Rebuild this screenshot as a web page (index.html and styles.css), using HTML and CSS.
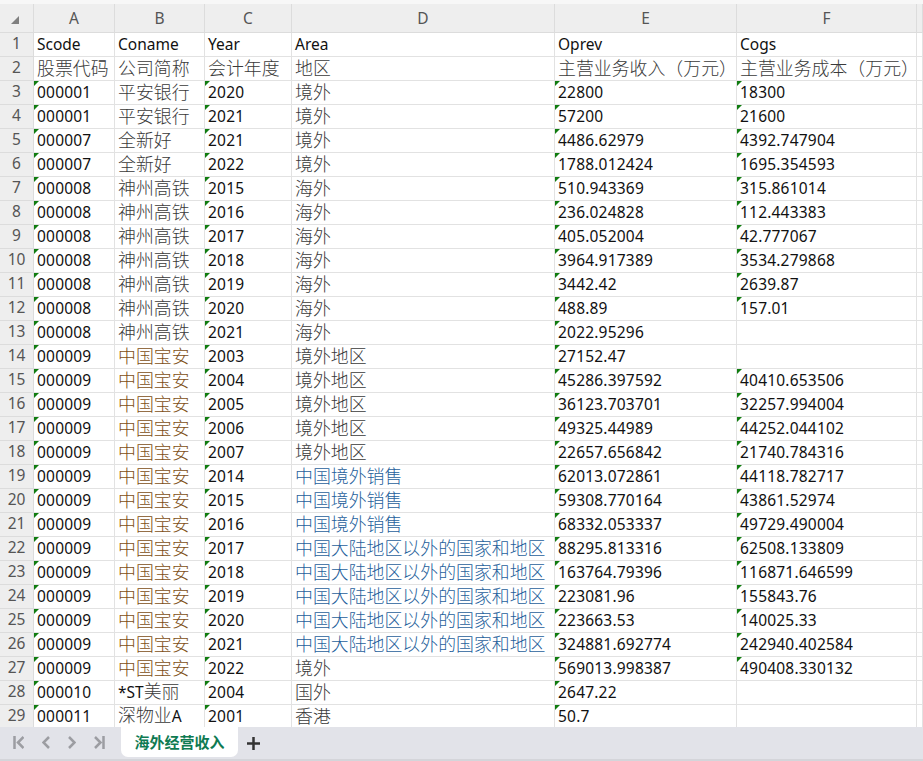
FILE: index.html
```html
<!DOCTYPE html>
<html lang="en">
<head>
    <meta charset="UTF-8">
    <meta name="viewport" content="width=device-width, initial-scale=1.0">
    <title>海外经营收入</title>
    <link rel="stylesheet" href="styles.css">
</head>
<body>
    <div class="sheet">
        <table class="grid">
            <colgroup>
                <col class="col-head"><col class="col-a"><col class="col-b"><col class="col-c"><col class="col-d"><col class="col-e"><col class="col-f"><col class="col-g">
            </colgroup>
            <thead>
                <tr>
                    <th class="corner"><svg width="8" height="8" viewBox="0 0 8 8"><path d="M8 0V8H0Z" fill="#7f7f7f"/></svg></th>
                    <th>A</th><th>B</th><th>C</th><th>D</th><th>E</th><th>F</th><th></th>
                </tr>
            </thead>
            <tbody>
                <tr><th>1</th><td>Scode</td><td>Coname</td><td>Year</td><td>Area</td><td>Oprev</td><td>Cogs</td><td></td></tr>
                <tr><th>2</th><td class="zh">股票代码</td><td class="zh">公司简称</td><td class="zh">会计年度</td><td class="zh">地区</td><td class="zh">主营业务收入（万元）</td><td class="zh">主营业务成本（万元）</td><td></td></tr>
                <tr><th>3</th><td class="n">000001</td><td class="zh">平安银行</td><td class="n">2020</td><td class="zh">境外</td><td class="n">22800</td><td class="n">18300</td><td></td></tr>
                <tr><th>4</th><td class="n">000001</td><td class="zh">平安银行</td><td class="n">2021</td><td class="zh">境外</td><td class="n">57200</td><td class="n">21600</td><td></td></tr>
                <tr><th>5</th><td class="n">000007</td><td class="zh">全新好</td><td class="n">2021</td><td class="zh">境外</td><td class="n">4486.62979</td><td class="n">4392.747904</td><td></td></tr>
                <tr><th>6</th><td class="n">000007</td><td class="zh">全新好</td><td class="n">2022</td><td class="zh">境外</td><td class="n">1788.012424</td><td class="n">1695.354593</td><td></td></tr>
                <tr><th>7</th><td class="n">000008</td><td class="zh">神州高铁</td><td class="n">2015</td><td class="zh">海外</td><td class="n">510.943369</td><td class="n">315.861014</td><td></td></tr>
                <tr><th>8</th><td class="n">000008</td><td class="zh">神州高铁</td><td class="n">2016</td><td class="zh">海外</td><td class="n">236.024828</td><td class="n">112.443383</td><td></td></tr>
                <tr><th>9</th><td class="n">000008</td><td class="zh">神州高铁</td><td class="n">2017</td><td class="zh">海外</td><td class="n">405.052004</td><td class="n">42.777067</td><td></td></tr>
                <tr><th>10</th><td class="n">000008</td><td class="zh">神州高铁</td><td class="n">2018</td><td class="zh">海外</td><td class="n">3964.917389</td><td class="n">3534.279868</td><td></td></tr>
                <tr><th>11</th><td class="n">000008</td><td class="zh">神州高铁</td><td class="n">2019</td><td class="zh">海外</td><td class="n">3442.42</td><td class="n">2639.87</td><td></td></tr>
                <tr><th>12</th><td class="n">000008</td><td class="zh">神州高铁</td><td class="n">2020</td><td class="zh">海外</td><td class="n">488.89</td><td class="n">157.01</td><td></td></tr>
                <tr><th>13</th><td class="n">000008</td><td class="zh">神州高铁</td><td class="n">2021</td><td class="zh">海外</td><td class="n">2022.95296</td><td></td><td></td></tr>
                <tr><th>14</th><td class="n">000009</td><td class="zh brown">中国宝安</td><td class="n">2003</td><td class="zh">境外地区</td><td class="n">27152.47</td><td></td><td></td></tr>
                <tr><th>15</th><td class="n">000009</td><td class="zh brown">中国宝安</td><td class="n">2004</td><td class="zh">境外地区</td><td class="n">45286.397592</td><td class="n">40410.653506</td><td></td></tr>
                <tr><th>16</th><td class="n">000009</td><td class="zh brown">中国宝安</td><td class="n">2005</td><td class="zh">境外地区</td><td class="n">36123.703701</td><td class="n">32257.994004</td><td></td></tr>
                <tr><th>17</th><td class="n">000009</td><td class="zh brown">中国宝安</td><td class="n">2006</td><td class="zh">境外地区</td><td class="n">49325.44989</td><td class="n">44252.044102</td><td></td></tr>
                <tr><th>18</th><td class="n">000009</td><td class="zh brown">中国宝安</td><td class="n">2007</td><td class="zh">境外地区</td><td class="n">22657.656842</td><td class="n">21740.784316</td><td></td></tr>
                <tr><th>19</th><td class="n">000009</td><td class="zh brown">中国宝安</td><td class="n">2014</td><td class="zh blue">中国境外销售</td><td class="n">62013.072861</td><td class="n">44118.782717</td><td></td></tr>
                <tr><th>20</th><td class="n">000009</td><td class="zh brown">中国宝安</td><td class="n">2015</td><td class="zh blue">中国境外销售</td><td class="n">59308.770164</td><td class="n">43861.52974</td><td></td></tr>
                <tr><th>21</th><td class="n">000009</td><td class="zh brown">中国宝安</td><td class="n">2016</td><td class="zh blue">中国境外销售</td><td class="n">68332.053337</td><td class="n">49729.490004</td><td></td></tr>
                <tr><th>22</th><td class="n">000009</td><td class="zh brown">中国宝安</td><td class="n">2017</td><td class="zh blue">中国大陆地区以外的国家和地区</td><td class="n">88295.813316</td><td class="n">62508.133809</td><td></td></tr>
                <tr><th>23</th><td class="n">000009</td><td class="zh brown">中国宝安</td><td class="n">2018</td><td class="zh blue">中国大陆地区以外的国家和地区</td><td class="n">163764.79396</td><td class="n">116871.646599</td><td></td></tr>
                <tr><th>24</th><td class="n">000009</td><td class="zh brown">中国宝安</td><td class="n">2019</td><td class="zh blue">中国大陆地区以外的国家和地区</td><td class="n">223081.96</td><td class="n">155843.76</td><td></td></tr>
                <tr><th>25</th><td class="n">000009</td><td class="zh brown">中国宝安</td><td class="n">2020</td><td class="zh blue">中国大陆地区以外的国家和地区</td><td class="n">223663.53</td><td class="n">140025.33</td><td></td></tr>
                <tr><th>26</th><td class="n">000009</td><td class="zh brown">中国宝安</td><td class="n">2021</td><td class="zh blue">中国大陆地区以外的国家和地区</td><td class="n">324881.692774</td><td class="n">242940.402584</td><td></td></tr>
                <tr><th>27</th><td class="n">000009</td><td class="zh brown">中国宝安</td><td class="n">2022</td><td class="zh">境外</td><td class="n">569013.998387</td><td class="n">490408.330132</td><td></td></tr>
                <tr><th>28</th><td class="n">000010</td><td>*ST<span class="zh">美丽</span></td><td class="n">2004</td><td class="zh">国外</td><td class="n">2647.22</td><td></td><td></td></tr>
                <tr><th>29</th><td class="n">000011</td><td><span class="zh">深物业</span>A</td><td class="n">2001</td><td class="zh">香港</td><td class="n">50.7</td><td></td><td></td></tr>
            </tbody>
        </table>
    </div>

    <div class="tabbar">
        <div class="nav">
            <svg width="11" height="13" viewBox="0 0 11 13"><path d="M1.500 0V13M10.500 1L5 6.500L10.500 12" /></svg>
            <svg width="8" height="13" viewBox="0 0 8 13"><path d="M7 1L1.500 6.500L7 12" /></svg>
            <svg width="8" height="13" viewBox="0 0 8 13"><path d="M1 1L6.500 6.500L1 12" /></svg>
            <svg width="11" height="13" viewBox="0 0 11 13"><path d="M9.500 0V13M1 1L6.500 6.500L1 12" /></svg>
        </div>
        <div class="tab">海外经营收入</div>
        <svg class="add" width="13" height="13" viewBox="0 0 13 13"><path d="M6.500 0V13M0 6.500H13" /></svg>
    </div>
</body>
</html>
```

FILE: styles.css
```css
html, body {
    margin: 0;
    height: 100%;
    overflow: hidden;
}
body {
    display: flex;
    flex-direction: column;
    background: #fff;
    font-family: "Noto Sans", "Noto Sans CJK SC", sans-serif;
}
.sheet {
    flex: 1;
    min-height: 0;
    overflow: hidden;
    padding-top: 4px;
    background: #f7f7f7;
}
.grid {
    border-collapse: separate;
    border-spacing: 0;
    table-layout: fixed;
    width: 923px;
    background: #fff;
    font-size: 15.5px;
    color: #111;
}
.col-head { width: 34px; }
.col-a { width: 81px; }
.col-b { width: 90px; }
.col-c { width: 87px; }
.col-d { width: 263px; }
.col-e { width: 182px; }
.col-f { width: 180px; }
.col-g { width: 6px; }

.grid th {
    background: #eeeeee;
    border-right: 1px solid #dcdcdc;
    border-bottom: 1px solid #dcdcdc;
    font-weight: 400;
    color: #555;
    padding: 0;
    text-align: center;
}
.grid thead th {
    height: 28px;
}
.grid tbody th {
    height: 24px;
    box-sizing: border-box;
    padding-bottom: 2px;
    line-height: 21px;
}
.corner svg {
    display: block;
    margin: 3px 0 0 11px;
}
.grid td {
    position: relative;
    height: 24px;
    box-sizing: border-box;
    padding: 0 0 0 3px;
    border-right: 1px solid #e2e2e2;
    border-bottom: 1px solid #e2e2e2;
    vertical-align: top;
    white-space: nowrap;
    line-height: 22px;
}
.grid td.n {
    letter-spacing: 0.2px;
}
.grid td.zh, .grid td .zh {
    font-size: 17.9px;
    font-weight: 300;
    color: #3a3a3a;
}
.grid td .zh {
    line-height: 1;
}
.grid td.brown { color: #7d4e14; }
.grid td.blue { color: #1f5f9c; }

/* the little green number-as-text marker */
.n::before {
    content: "";
    position: absolute;
    top: 0;
    left: 0;
    border-top: 5px solid #107c10;
    border-right: 5px solid transparent;
}

.tabbar {
    flex: none;
    display: flex;
    align-items: flex-start;
    height: 34px;
    box-sizing: border-box;
    background: #e2e3e9;
    border-bottom: 2px solid #d4d5da;
}
.nav {
    display: flex;
    align-items: center;
    gap: 18px;
    height: 30px;
    padding-left: 13px;
    width: 121px;
    box-sizing: border-box;
}
.nav path {
    fill: none;
    stroke: #9c9da2;
    stroke-width: 2.5;
}
.tab {
    width: 117px;
    height: 30px;
    background: #fff;
    border-radius: 0 0 7px 7px;
    text-align: center;
    line-height: 30px;
    font-size: 15px;
    font-weight: 700;
    color: #0e7a52;
}
.add {
    margin: 10px 0 0 9px;
}
.add path {
    stroke: #333;
    stroke-width: 2.5;
    fill: none;
}
```
